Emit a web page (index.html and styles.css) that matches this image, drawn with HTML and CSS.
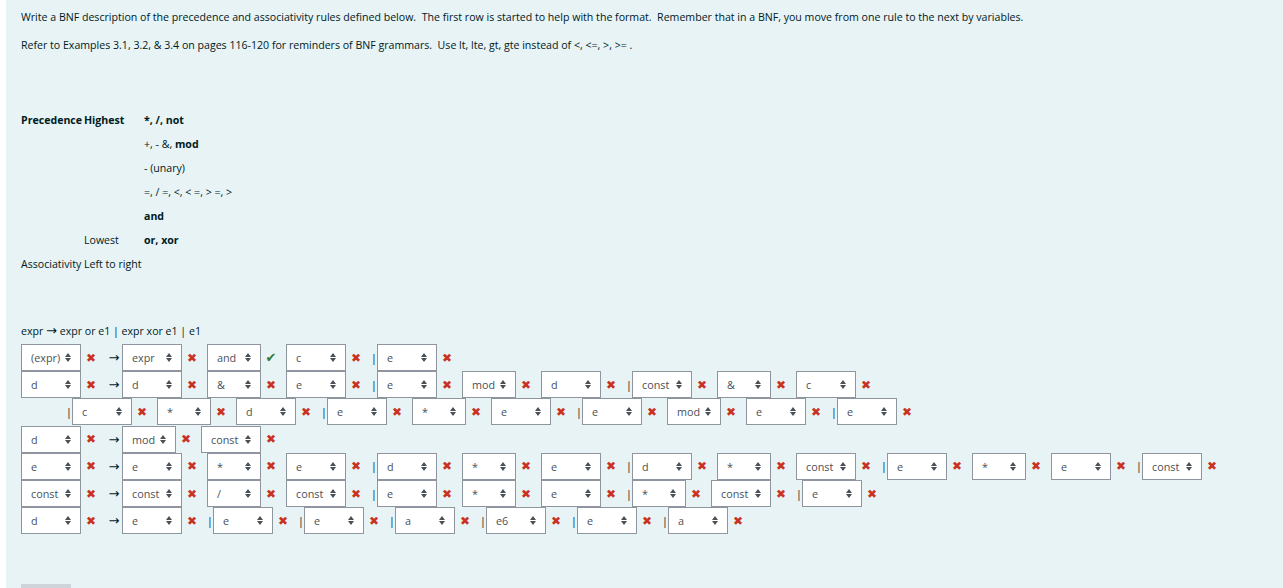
FILE: index.html
```html
<!DOCTYPE html>
<html lang="en">
<head>
  <meta charset="UTF-8">
  <title>BNF question</title>
  <link rel="stylesheet" href="styles.css">
</head>
<body>
  <div class="formulation">
    <p>Write a BNF description of the precedence and associativity rules defined below.&nbsp; The first row is started to help with the format.&nbsp; Remember that in a BNF, you move from one rule to the next by variables.</p>
    <p>Refer to Examples 3.1, 3.2, &amp; 3.4 on pages 116-120 for reminders of BNF grammars.&nbsp; Use lt, lte, gt, gte instead of &lt;, &lt;=, &gt;, &gt;= .</p>

    <div class="prec">
      <b>Precedence</b><b>Highest</b><b>*, /, not</b>
      <span></span><span></span><span>+, - &amp;, <b>mod</b></span>
      <span></span><span></span><span>- (unary)</span>
      <span></span><span></span><span>=, / =, &lt;, &lt; =, &gt; =, &gt;</span>
      <span></span><span></span><b>and</b>
      <span></span><span>Lowest</span><b>or, xor</b>
      <span>Associativity</span><span>Left to right</span><span></span>
    </div>

    <p class="rule">expr <span class="arrow">&rarr;</span> expr or e1 | expr xor e1 | e1</p>

    <div class="answers">
      <div class="row">
        <span class="pick"><select><option>(expr)</option></select></span><i class="bad">✖</i><span class="to">&rarr;</span>
        <span class="pick"><select><option>expr</option></select></span><i class="bad">✖</i>
        <span class="pick"><select class="op"><option>and</option></select></span><i class="good">✔</i>
        <span class="pick"><select><option>c</option></select></span><i class="bad">✖</i><span class="bar">|</span>
        <span class="pick"><select><option>e</option></select></span><i class="bad">✖</i>
      </div>
      <div class="row">
        <span class="pick"><select><option>d</option></select></span><i class="bad">✖</i><span class="to">&rarr;</span>
        <span class="pick"><select><option>d</option></select></span><i class="bad">✖</i>
        <span class="pick"><select class="op"><option>&amp;</option></select></span><i class="bad">✖</i>
        <span class="pick"><select><option>e</option></select></span><i class="bad">✖</i><span class="bar">|</span>
        <span class="pick"><select><option>e</option></select></span><i class="bad">✖</i>
        <span class="pick"><select class="op"><option>mod</option></select></span><i class="bad">✖</i>
        <span class="pick"><select><option>d</option></select></span><i class="bad">✖</i><span class="bar">|</span>
        <span class="pick"><select><option>const</option></select></span><i class="bad">✖</i>
        <span class="pick"><select class="op"><option>&amp;</option></select></span><i class="bad">✖</i>
        <span class="pick"><select><option>c</option></select></span><i class="bad">✖</i>
      </div>
      <div class="row indent">
        <span class="bar">|</span>
        <span class="pick"><select><option>c</option></select></span><i class="bad">✖</i>
        <span class="pick"><select class="op"><option>*</option></select></span><i class="bad">✖</i>
        <span class="pick"><select><option>d</option></select></span><i class="bad">✖</i><span class="bar">|</span>
        <span class="pick"><select><option>e</option></select></span><i class="bad">✖</i>
        <span class="pick"><select class="op"><option>*</option></select></span><i class="bad">✖</i>
        <span class="pick"><select><option>e</option></select></span><i class="bad">✖</i><span class="bar">|</span>
        <span class="pick"><select><option>e</option></select></span><i class="bad">✖</i>
        <span class="pick"><select class="op"><option>mod</option></select></span><i class="bad">✖</i>
        <span class="pick"><select><option>e</option></select></span><i class="bad">✖</i><span class="bar">|</span>
        <span class="pick"><select><option>e</option></select></span><i class="bad">✖</i>
      </div>
      <div class="row">
        <span class="pick"><select><option>d</option></select></span><i class="bad">✖</i><span class="to">&rarr;</span>
        <span class="pick"><select class="op"><option>mod</option></select></span><i class="bad">✖</i>
        <span class="pick"><select><option>const</option></select></span><i class="bad">✖</i>
      </div>
      <div class="row">
        <span class="pick"><select><option>e</option></select></span><i class="bad">✖</i><span class="to">&rarr;</span>
        <span class="pick"><select><option>e</option></select></span><i class="bad">✖</i>
        <span class="pick"><select class="op"><option>*</option></select></span><i class="bad">✖</i>
        <span class="pick"><select><option>e</option></select></span><i class="bad">✖</i><span class="bar">|</span>
        <span class="pick"><select><option>d</option></select></span><i class="bad">✖</i>
        <span class="pick"><select class="op"><option>*</option></select></span><i class="bad">✖</i>
        <span class="pick"><select><option>e</option></select></span><i class="bad">✖</i><span class="bar">|</span>
        <span class="pick"><select><option>d</option></select></span><i class="bad">✖</i>
        <span class="pick"><select class="op"><option>*</option></select></span><i class="bad">✖</i>
        <span class="pick"><select><option>const</option></select></span><i class="bad">✖</i><span class="bar">|</span>
        <span class="pick"><select><option>e</option></select></span><i class="bad">✖</i>
        <span class="pick"><select class="op"><option>*</option></select></span><i class="bad">✖</i>
        <span class="pick"><select><option>e</option></select></span><i class="bad">✖</i><span class="bar">|</span>
        <span class="pick"><select><option>const</option></select></span><i class="bad">✖</i>
      </div>
      <div class="row">
        <span class="pick"><select><option>const</option></select></span><i class="bad">✖</i><span class="to">&rarr;</span>
        <span class="pick"><select><option>const</option></select></span><i class="bad">✖</i>
        <span class="pick"><select class="op"><option>/</option></select></span><i class="bad">✖</i>
        <span class="pick"><select><option>const</option></select></span><i class="bad">✖</i><span class="bar">|</span>
        <span class="pick"><select><option>e</option></select></span><i class="bad">✖</i>
        <span class="pick"><select class="op"><option>*</option></select></span><i class="bad">✖</i>
        <span class="pick"><select><option>e</option></select></span><i class="bad">✖</i><span class="bar">|</span>
        <span class="pick"><select class="op"><option>*</option></select></span><i class="bad">✖</i>
        <span class="pick"><select><option>const</option></select></span><i class="bad">✖</i><span class="bar">|</span>
        <span class="pick"><select><option>e</option></select></span><i class="bad">✖</i>
      </div>
      <div class="row">
        <span class="pick"><select><option>d</option></select></span><i class="bad">✖</i><span class="to">&rarr;</span>
        <span class="pick"><select><option>e</option></select></span><i class="bad">✖</i><span class="bar">|</span>
        <span class="pick"><select><option>e</option></select></span><i class="bad">✖</i><span class="bar">|</span>
        <span class="pick"><select><option>e</option></select></span><i class="bad">✖</i><span class="bar">|</span>
        <span class="pick"><select><option>a</option></select></span><i class="bad">✖</i><span class="bar">|</span>
        <span class="pick"><select><option>e6</option></select></span><i class="bad">✖</i><span class="bar">|</span>
        <span class="pick"><select><option>e</option></select></span><i class="bad">✖</i><span class="bar">|</span>
        <span class="pick"><select><option>a</option></select></span><i class="bad">✖</i>
      </div>
    </div>

    <button class="check" aria-label="Check"></button>
  </div>
</body>
</html>
```

FILE: styles.css
```css
/* Page */
body {
  margin: 0;
  background: #fff;
  color: #001a1e;
  font-family: "Open Sans", "Noto Sans", sans-serif;
  font-size: 10.6px;
}

/* Question box */
.formulation {
  margin-left: 6px;
  padding: 8px 15px 0;
  background: #e7f3f5;
  height: 600px;
}

.formulation p {
  margin: 0 0 10px;
  line-height: 18px;
}

/* Precedence table */
.prec {
  display: grid;
  grid-template-columns: 63px 60px auto;
  grid-auto-rows: 24px;
  align-items: center;
  margin-top: 54px;
  white-space: nowrap;
}

.formulation p.rule {
  margin: 46px 0 4px;
}

/* thin arrow, like the one in the question text */
.arrow,
.to {
  font-family: "DejaVu Sans", sans-serif;
  font-size: 13px;
  line-height: 1;
}

/* Answer rows */
.row {
  display: flex;
  align-items: center;
  height: 27.2px;
}

.row.indent {
  padding-left: 45px;
}

.pick {
  position: relative;
  display: block;
}

/* little up/down arrows of the dropdown */
.pick::before,
.pick::after {
  content: "";
  position: absolute;
  right: 10px;
  border-left: 3px solid transparent;
  border-right: 3px solid transparent;
}
.pick::before {
  top: 9px;
  border-bottom: 4px solid #495057;
}
.pick::after {
  top: 14px;
  border-top: 4px solid #495057;
}

.pick select {
  appearance: none;
  -webkit-appearance: none;
  display: block;
  width: 60px;
  height: 27px;
  margin: 0;
  padding: 0 0 0 9px;
  border: 1px solid #8f959e;
  border-radius: 0;
  background: #fff;
  color: #495057;
  font-family: inherit;
  font-size: 10.8px;
}

.pick select.op {
  width: 54px;
}

/* Feedback marks */
.bad,
.good {
  width: 20px;
  margin-right: 5px;
  text-align: center;
  font-style: normal;
  font-family: "DejaVu Sans", sans-serif;
  font-size: 12px;
}
.bad {
  color: #ca3120;
}
.good {
  color: #357a32;
  font-size: 13px;
}

.to {
  width: 16px;
  text-align: center;
}

.bar {
  width: 6px;
  text-align: center;
}

/* Check button, only its top edge is on screen */
.check {
  display: block;
  margin-top: 50px;
  width: 50px;
  height: 30px;
  border: none;
  background: #ced4da;
}
```
